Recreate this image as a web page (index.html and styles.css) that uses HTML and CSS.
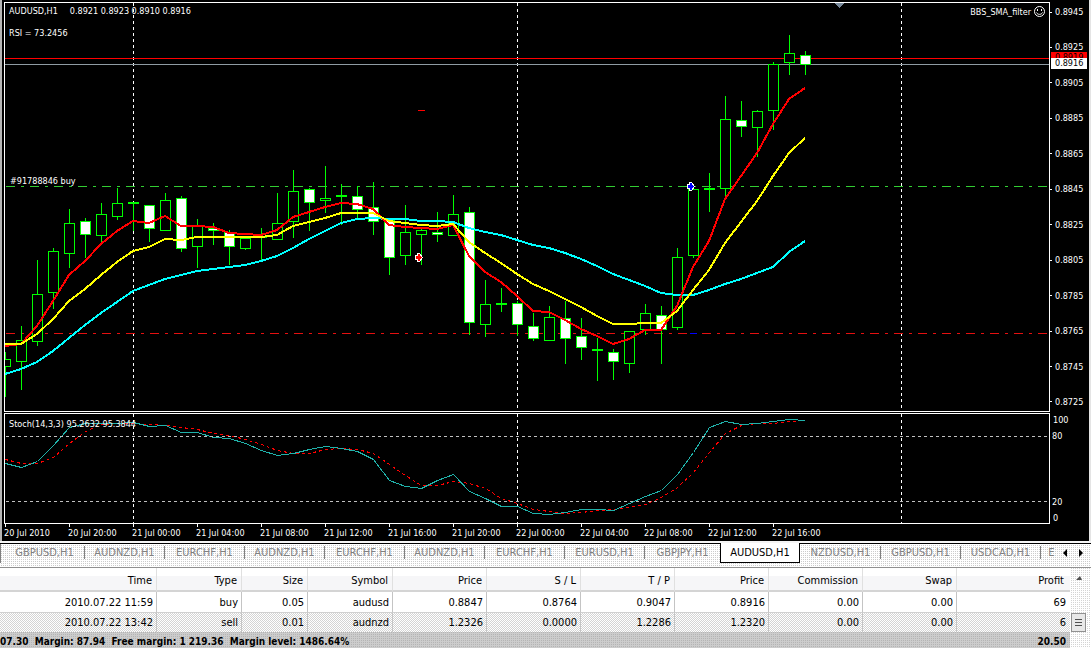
FILE: index.html
```html
<!DOCTYPE html>
<html lang="en">
<head>
<meta charset="utf-8">
<title>AUDUSD,H1</title>
<link rel="stylesheet" href="styles.css">
</head>
<body>
<main class="chart">
  <section class="pane pane-price">
    <svg class="plot" aria-hidden="true">
      <g shape-rendering="crispEdges">
        <path class="period" d="M128.5 0V408M512.5 0V408M896.5 0V408"/>
        <path class="shift" d="M829 0h10l-5 5z"/>
        <line class="ask" x1="0" x2="100%" y1="55.5" y2="55.5"/>
        <line class="bid" x1="0" x2="100%" y1="61.5" y2="61.5"/>
        <line class="order" x1="1" x2="100%" y1="183.5" y2="183.5"/>
        <line class="stop" x1="1" x2="100%" y1="330.5" y2="330.5"/>
      </g>
      <g transform="translate(-5 -3)" shape-rendering="crispEdges">
        <path class="mark-stop" d="M690 333.5h7"/>
        <path class="mark-ask" d="M418 110.5h7"/>
        <g id="candles"></g>
        <polyline class="ma ma-slow" id="ma-slow"/>
        <polyline class="ma ma-fast" id="ma-fast"/>
        <polyline class="ma ma-mid" id="ma-mid"/>
        <path class="arrow arrow-red" d="M415.500 255.500h2v-2h2l3 4l-3 4h-2v-2h-2z"/>
        <path class="arrow arrow-blue" d="M687.500 184.500h2v-2h2l3 4l-3 4h-2v-2h-2z"/>
      </g>
    </svg>
    <div class="quote"><span>AUDUSD,H1</span><span>0.8921 0.8923 0.8910 0.8916</span></div>
    <div class="rsi">RSI = 73.2456</div>
    <div class="ticket">#91788846 buy</div>
    <div class="expert">BBS_SMA_filter
      <svg class="smiley" viewBox="0 0 11 11" aria-hidden="true">
        <circle cx="5.5" cy="5.5" r="5"/>
        <path d="M3.500 3v2M7.500 3v2M2.500 6.500c1 2.500 5 2.500 6 0"/>
      </svg>
    </div>
  </section>
  <div class="axis axis-price">
    <span>0.8945</span><span>0.8925</span><span>0.8905</span><span>0.8885</span>
    <span>0.8865</span><span>0.8845</span><span>0.8825</span><span>0.8805</span>
    <span>0.8785</span><span>0.8765</span><span>0.8745</span><span>0.8725</span>
    <b class="tag tag-ask">0.8919</b>
    <b class="tag tag-bid">0.8916</b>
  </div>
  <section class="pane pane-stoch">
    <svg class="plot" aria-hidden="true">
      <g transform="translate(-5 -414)" shape-rendering="crispEdges">
        <path class="period" d="M133.5 414V523M517.5 414V523M901.5 414V523"/>
        <polyline class="signal" id="signal"/>
        <polyline class="stoch" id="stoch"/>
      </g>
      <g shape-rendering="crispEdges">
        <line class="level" x1="1" x2="100%" y1="22.5" y2="22.5"/>
        <line class="level" x1="1" x2="100%" y1="87.5" y2="87.5"/>
      </g>
    </svg>
    <div class="stoch-label">Stoch(14,3,3) 95.2632 95.3844</div>
  </section>
  <div class="axis axis-stoch">
    <div class="pair"><span class="end">100</span><span>80</span></div>
    <div class="pair"><span>20</span><span class="end">0</span></div>
  </div>
  <div class="times">
    <span>20 Jul 2010</span><span>20 Jul 20:00</span><span>21 Jul 00:00</span><span>21 Jul 04:00</span>
    <span>21 Jul 08:00</span><span>21 Jul 12:00</span><span>21 Jul 16:00</span><span>21 Jul 20:00</span>
    <span>22 Jul 00:00</span><span>22 Jul 04:00</span><span>22 Jul 08:00</span><span>22 Jul 12:00</span>
    <span>22 Jul 16:00</span>
  </div>
</main>
<nav class="tabbar">
  <div class="tabs">
    <button class="tab">GBPUSD,H1</button>
    <button class="tab">AUDNZD,H1</button>
    <button class="tab">EURCHF,H1</button>
    <button class="tab">AUDNZD,H1</button>
    <button class="tab">EURCHF,H1</button>
    <button class="tab">AUDNZD,H1</button>
    <button class="tab">EURCHF,H1</button>
    <button class="tab">EURUSD,H1</button>
    <button class="tab tab-before">GBPJPY,H1</button>
    <button class="tab tab-active">AUDUSD,H1</button>
    <button class="tab">NZDUSD,H1</button>
    <button class="tab">GBPUSD,H1</button>
    <button class="tab">USDCAD,H1</button>
    <button class="tab tab-cut">E</button>
  </div>
  <button class="scroll" aria-label="Previous tabs"><svg viewBox="0 0 4 8"><path d="M4 0v8L0 4z"/></svg></button>
  <button class="scroll" aria-label="Next tabs"><svg viewBox="0 0 4 8"><path d="M0 0v8l4-4z"/></svg></button>
</nav>
<section class="terminal">
  <div class="orders">
    <table>
      <colgroup>
        <col><col class="c-type"><col class="c-size"><col class="c-type">
        <col class="c-num"><col class="c-num"><col class="c-num"><col class="c-num"><col class="c-num"><col class="c-num">
        <col class="c-profit">
      </colgroup>
      <thead>
        <tr><th>Time</th><th>Type</th><th>Size</th><th>Symbol</th><th>Price</th><th>S / L</th><th>T / P</th><th>Price</th><th>Commission</th><th>Swap</th><th>Profit</th></tr>
      </thead>
      <tbody>
        <tr class="row-buy"><td>2010.07.22 11:59</td><td>buy</td><td>0.05</td><td>audusd</td><td>0.8847</td><td>0.8764</td><td>0.9047</td><td>0.8916</td><td>0.00</td><td>0.00</td><td>69</td></tr>
        <tr class="row-sell"><td>2010.07.22 13:42</td><td>sell</td><td>0.01</td><td>audnzd</td><td>1.2326</td><td>0.0000</td><td>1.2286</td><td>1.2320</td><td>0.00</td><td>0.00</td><td>6</td></tr>
      </tbody>
    </table>
    <div class="balance"><span>07.30&nbsp; Margin: 87.94&nbsp; Free margin: 1 219.36&nbsp; Margin level: 1486.64%</span><span>20.50</span></div>
  </div>
  <div class="scrollbar">
    <button class="up" aria-label="Scroll up"><svg viewBox="0 0 6 4"><path d="M0 4L4 0l2 4z"/></svg></button>
    <button class="thumb" aria-label="Scroll thumb"><svg viewBox="0 0 7 7"><path d="M0 .5h7M0 3.500h7M0 6.500h7"/></svg></button>
  </div>
</section>
<script src="chart.js"></script>
</body>
</html>
```
FILE: styles.css
```css
* { box-sizing: border-box; }

body {
  margin: 0;
  height: 100vh;
  display: flex;
  flex-direction: column;
  overflow: hidden;
  background: #f0f0f0;
  color: #000;
  font-family: "DejaVu Sans Condensed", "Noto Sans", sans-serif;
  font-size: 11px;
}

button {
  margin: 0;
  padding: 0;
  border: 0;
  background: none;
  color: inherit;
  font: inherit;
}

/* chart window */
.chart {
  flex: 1;
  min-height: 0;
  display: grid;
  grid-template-columns: 1fr 39px;
  grid-template-rows: 1fr 111px 17px;
  padding: 2px 0 0 2px;
  border-left: 2px solid #b4b4b4;
  border-right: 2px solid #e4e4e4;
  background: #000;
  color: #fff;
  font-size: 9px;
  line-height: 10px;
}

.pane {
  position: relative;
  border: 1px solid #fff;
  overflow: hidden;
}
.pane-price { margin-bottom: 1px; }

.plot {
  display: block;
  width: 100%;
  height: 100%;
  fill: none;
}

.period { stroke: #fff; stroke-dasharray: 3 3; }
.shift { fill: #778899; }
.ask { stroke: #f00; }
.bid { stroke: #8f9ba3; }
.order { stroke: #32cd32; stroke-dasharray: 9 6 3 6; }
.stop { stroke: #e41010; stroke-dasharray: 9 6 3 6; }
.mark-stop { stroke: #00f; }
.mark-ask { stroke: #f00; }
.candle { stroke: #0f0; fill: #000; }
.candle-down { fill: #fff; }
.wick { stroke: #0f0; }
.doji { stroke: #0f0; stroke-width: 2; }
.ma { stroke-width: 2; }
.ma-slow { stroke: #0ff; }
.ma-mid { stroke: #ff0; }
.ma-fast { stroke: #f00; }
.arrow { stroke: #fff; }
.arrow-red { fill: #f00; }
.arrow-blue { fill: #00f; }
.level { stroke: #c0c0c0; stroke-dasharray: 3 3; }
.stoch { stroke: #20b2aa; }
.signal { stroke: #f00; stroke-dasharray: 3 3; }

.quote, .rsi, .ticket, .expert, .stoch-label {
  position: absolute;
  white-space: nowrap;
}
.quote { left: 4px; top: 3px; display: flex; gap: 12px; }
.rsi { left: 4px; top: 25px; }
.ticket { left: 5px; top: 173px; }
.stoch-label { left: 4px; top: 5px; }
.expert {
  right: 4px;
  top: 3px;
  display: flex;
  align-items: center;
  gap: 3px;
}
.smiley {
  width: 11px;
  height: 11px;
  fill: none;
  stroke: #fff;
}

.axis {
  position: relative;
  display: flex;
  flex-direction: column;
  justify-content: space-between;
}
.axis-price { padding: 5px 0 6px; }
.axis-price span { display: flex; align-items: center; gap: 3px; }
.axis-price span::before {
  content: "";
  width: 2px;
  height: 1px;
  background: #fff;
}
.tag {
  position: absolute;
  left: 1px;
  right: 2px;
  height: 11px;
  padding-left: 4px;
  color: #000;
  font-weight: normal;
}
.tag-ask { top: 50px; height: 6px; overflow: hidden; background: #f00; }
.tag-bid { top: 56px; background: #fff; }
.axis-stoch { padding: 2px 0 1px 2px; }
.pair { display: grid; gap: 6px; }
.end { padding-left: 1px; }

.times {
  grid-column: 1 / -1;
  display: flex;
  overflow: hidden;
}
.times span {
  flex: none;
  width: 64px;
  padding-top: 4px;
  white-space: nowrap;
  background: linear-gradient(#fff, #fff) 1px 0 / 1px 3px no-repeat;
}

/* chart tabs */
.tabbar {
  flex: none;
  display: flex;
  height: 27px;
  border-top: 2px solid #f4f4f4;
  border-bottom: 1px solid #909090;
  padding-right: 2px;
  background:
    linear-gradient(#000, #000) 0 0 / 100% 1px no-repeat,
    repeating-conic-gradient(#ccc 0 25%, #fff 0 100%) 0 0 / 2px 2px;
  color: #808080;
}
.tabs {
  flex: 1;
  min-width: 0;
  display: flex;
  padding-left: 5px;
  overflow: hidden;
  background: linear-gradient(#808080, #808080) 0 1px / 1px 19px no-repeat;
}
.tab {
  flex: none;
  width: 80px;
  height: 13px;
  margin-top: 3px;
  border-right: 1px solid #808080;
  line-height: 13px;
}
.tab-before { border-color: transparent; padding-right: 4px; }
.tab-active {
  height: 20px;
  margin: 0 1px 0 -5px;
  padding-bottom: 1px;
  border: 1px solid #000;
  border-top: 0;
  background: #fff;
  color: #000;
}
.tab-cut { width: 17px; border: 0; padding-left: 4px; }
.scroll {
  width: 16px;
  height: 20px;
}
.scroll svg { display: block; width: 4px; height: 8px; margin: 0 auto; }

/* terminal */
.terminal {
  flex: none;
  display: flex;
}
.orders { flex: 1; min-width: 0; }
table {
  width: 100%;
  table-layout: fixed;
  border-collapse: separate;
  border-spacing: 0;
  line-height: 14px;
}
.c-type { width: 85px; }
.c-size { width: 66px; }
.c-num { width: 94px; }
.c-profit { width: 113px; }
th, td {
  padding: 0 3px 0 0;
  border-right: 1px solid #c4c4c4;
  font-weight: normal;
  text-align: right;
  white-space: nowrap;
}
th {
  height: 24px;
  padding: 4px 4px 0 0;
  border-right-color: #e0e0e0;
  border-bottom: 2px solid #d4d4d4;
  background: linear-gradient(#fff 0 8px, #f6f6f8 8px 100%);
}
td:last-child, th:last-child { border-right: 0; padding-right: 4px; }
th:last-child { padding-right: 6px; }
.row-buy td { height: 21px; padding-top: 2px; background: #fff; border-bottom: 1px solid #d0d0d0; }
.row-sell td {
  height: 19px;
  background: repeating-conic-gradient(#d4d4d4 0 25%, #fff 0 50%) 0 0 / 2px 2px;
}
.balance {
  display: flex;
  justify-content: space-between;
  height: 16px;
  padding: 3px 4px 0 0;
  overflow: hidden;
  background: repeating-conic-gradient(#b4b4b4 0 25%, #ccc 0 100%) 0 0 / 2px 2px;
  font-size: 10px;
  font-weight: bold;
  line-height: 14px;
  white-space: nowrap;
}
.scrollbar {
  flex: none;
  width: 21px;
  display: flex;
  flex-direction: column;
  justify-content: space-between;
  padding: 2px 5px 16px 1px;
  background: repeating-conic-gradient(#d4d4d4 0 25%, #fff 0 100%) 0 0 / 2px 2px;
}
.up, .thumb { height: 15px; }
.up svg { display: block; width: 6px; height: 4px; margin: 0 auto; fill: #505050; }
.thumb {
  height: 19px;
  border: 1px solid #909090;
  background: #e8e8e8;
}
.thumb svg { display: block; width: 7px; height: 7px; margin: 0 auto; stroke: #505050; }
```
FILE: chart.js
```javascript
const NS = "http://www.w3.org/2000/svg";
const STEP = 16;
const FIRST = 5;
const barX = (i) => FIRST + i * STEP;

// high, body top, body bottom, low, kind: u = up, d = down, j = doji
const bars = [
  [352, 359, 366, 397, "u"], [326, 340, 361, 390, "u"], [260, 294, 341, 346, "u"],
  [248, 251, 292, 309, "u"], [209, 223, 253, 268, "u"], [218, 221, 234, 258, "d"],
  [203, 214, 235, 242, "u"], [188, 203, 216, 220, "u"], [202, 203, 203, 231, "j"],
  [205, 205, 228, 242, "d"], [193, 200, 230, 231, "u"], [196, 198, 248, 252, "d"],
  [219, 226, 246, 268, "u"], [223, 228, 230, 245, "d"], [230, 232, 246, 265, "d"],
  [238, 238, 248, 250, "u"], [228, 237, 237, 262, "j"], [193, 223, 239, 240, "u"],
  [170, 191, 221, 238, "u"], [188, 189, 202, 231, "d"], [166, 198, 200, 213, "u"],
  [184, 196, 196, 225, "j"], [186, 196, 209, 220, "d"], [182, 207, 221, 235, "d"],
  [218, 220, 257, 275, "d"], [205, 232, 255, 265, "u"], [228, 230, 234, 265, "u"],
  [212, 232, 234, 242, "d"], [195, 214, 235, 236, "u"], [207, 212, 322, 335, "d"],
  [280, 304, 324, 337, "u"], [288, 304, 304, 312, "j"], [301, 303, 324, 336, "d"],
  [313, 326, 338, 341, "d"], [306, 317, 340, 341, "u"], [301, 318, 338, 364, "d"],
  [318, 336, 347, 360, "d"], [338, 350, 350, 381, "j"], [349, 352, 361, 380, "d"],
  [331, 331, 363, 373, "u"], [304, 313, 329, 335, "u"], [306, 315, 329, 364, "d"],
  [248, 257, 327, 330, "u"], [189, 189, 255, 258, "u"], [173, 189, 189, 212, "j"],
  [96, 119, 188, 200, "u"], [101, 120, 126, 137, "d"], [110, 111, 127, 157, "u"],
  [62, 64, 110, 130, "u"], [35, 53, 62, 75, "u"], [51, 55, 64, 75, "d"],
];

const series = {
  "ma-fast": [346, 344, 326, 301, 275, 261, 244, 231, 221, 223, 216, 226, 226, 227, 233, 234, 235,
    230, 217, 212, 207, 203, 204, 209, 225, 227, 228, 229, 225, 256, 272, 282, 296, 311, 312, 320,
    329, 336, 344, 339, 330, 330, 306, 267, 241, 199, 176, 153, 124, 99, 88],
  "ma-mid": [344, 344, 334, 319, 301, 289, 275, 262, 251, 247, 239, 240, 237, 237, 237, 237, 237,
    235, 226, 222, 218, 213, 213, 213, 221, 223, 225, 226, 224, 242, 253, 263, 274, 284, 291, 299,
    307, 316, 324, 324, 323, 323, 311, 290, 270, 243, 222, 201, 176, 153, 138],
  "ma-slow": [374, 369, 362, 351, 338, 325, 313, 302, 291, 285, 279, 275, 271, 269, 267, 265, 261,
    256, 248, 239, 231, 223, 219, 218, 219, 219, 221, 221, 222, 228, 232, 235, 240, 245, 248, 253,
    259, 266, 274, 280, 286, 293, 295, 295, 290, 284, 279, 273, 267, 252, 241],
  stoch: [463, 467, 461, 445, 427, 423, 423, 423, 422, 426, 425, 432, 432, 437, 438, 443, 450,
    455, 453, 449, 446, 448, 451, 459, 480, 486, 488, 480, 474, 491, 498, 506, 506, 513, 514, 512,
    509, 509, 510, 503, 496, 490, 474, 452, 427, 421, 424, 423, 421, 419, 420],
  signal: [459, 463, 463, 457, 443, 431, 424, 423, 423, 424, 425, 427, 429, 433, 435, 439, 444,
    450, 453, 453, 449, 448, 449, 453, 464, 475, 485, 485, 481, 483, 488, 498, 503, 509, 511, 513,
    512, 510, 509, 507, 504, 497, 487, 472, 452, 433, 425, 423, 423, 421, 420],
};

function add(parent, tag, attrs) {
  const node = document.createElementNS(NS, tag);
  for (const [name, value] of Object.entries(attrs)) node.setAttribute(name, value);
  parent.appendChild(node);
}

const candles = document.getElementById("candles");
bars.forEach(([high, top, bottom, low, kind], i) => {
  const x = barX(i);
  add(candles, "path", { class: "wick", d: `M${x + 0.5} ${high}V${low}` });
  if (kind === "j") {
    add(candles, "path", { class: "doji", d: `M${x - 5} ${top}h11` });
  } else {
    add(candles, "rect", {
      class: kind === "d" ? "candle candle-down" : "candle",
      x: x - 4.5, y: top + 0.5, width: 10, height: bottom - top,
    });
  }
});

for (const [id, values] of Object.entries(series)) {
  const half = id.startsWith("ma") ? 0 : 0.5;
  const points = values.map((y, i) => `${barX(i) + half},${y + half}`).join(" ");
  document.getElementById(id).setAttribute("points", points);
}
```
